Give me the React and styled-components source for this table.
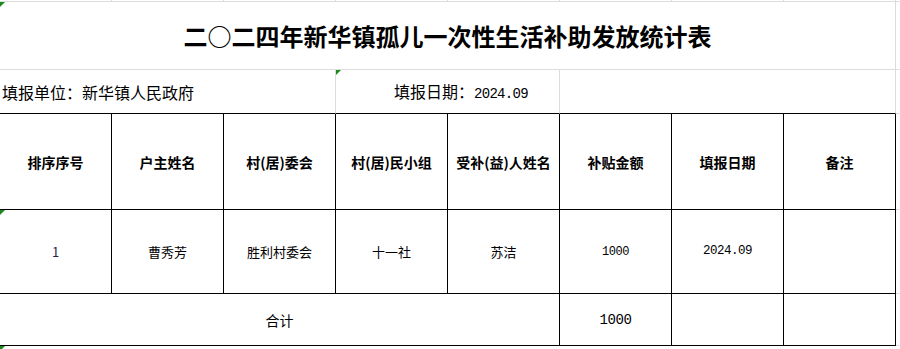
import React from "react";
import styled, { createGlobalStyle } from "styled-components";

const GlobalStyle = createGlobalStyle`
  html, body {
    margin: 0;
    padding: 0;
    background: #ffffff;
  }
  body {
    font-family: "Noto Sans CJK SC", "Liberation Sans", sans-serif;
    color: #000;
  }
`;

const GRID = "#dcdcdc";
const INK = "#000000";

const Sheet = styled.div`
  width: 900px;
  height: 349px;
  display: grid;
  grid-template-columns: repeat(8, 112px) 4px;
  grid-template-rows: 2px 68px 44px 96px 84px 52px 3px;
  overflow: hidden;
`;

const Cell = styled.div`
  position: relative;
  box-sizing: border-box;
  grid-column: ${({ span }) => (span ? `span ${span}` : "auto")};
  border-right: 1px solid ${({ right }) => right || "transparent"};
  border-bottom: 1px solid ${({ bottom }) => bottom || "transparent"};
  display: flex;
  align-items: center;
  justify-content: ${({ align }) => align || "center"};
  padding-left: ${({ indent }) => indent || 0}px;
  white-space: nowrap;
  min-width: 0;
`;

const Title = styled.span`
  font-size: 24px;
  font-weight: 700;
  line-height: 1;
`;

const Info = styled.span`
  font-size: 16px;
  line-height: 1;
`;

const Head = styled.span`
  font-size: 14px;
  font-weight: 700;
  line-height: 1;
`;

const Text = styled.span`
  font-size: ${({ size }) => size || 13}px;
  line-height: 1;
  color: ${({ tone }) => tone || INK};
`;

// SimSun-like half width digits
const Num = styled.span`
  font-family: "Liberation Mono", monospace;
  font-size: ${({ size }) => size || 12}px;
  letter-spacing: ${({ track }) => (track !== undefined ? track : -0.5)}px;
  line-height: 1;
`;

const Flag = styled.span`
  position: absolute;
  left: 0;
  top: 0;
  width: 0;
  height: 0;
  border-top: 5px solid #1a8a1a;
  border-right: 5px solid transparent;
`;

const headers = [
  "排序序号",
  "户主姓名",
  "村(居)委会",
  "村(居)民小组",
  "受补(益)人姓名",
  "补贴金额",
  "填报日期",
  "备注",
];

const rows = [
  {
    no: "1",
    owner: "曹秀芳",
    village: "胜利村委会",
    group: "十一社",
    receiver: "苏洁",
    amount: "1000",
    date: "2024.09",
    note: "",
  },
];

function App() {
  return (
    <>
      <GlobalStyle />
      <Sheet>
        {/* top strip of the sheet grid */}
        {Array.from({ length: 8 }).map((_, i) => (
          <Cell key={`s${i}`} right={GRID} bottom={GRID} />
        ))}
        <Cell bottom={GRID} />

        {/* title */}
        <Cell span={8} right={GRID} bottom={GRID}>
          <Flag />
          <Title>二○二四年新华镇孤儿一次性生活补助发放统计表</Title>
        </Cell>
        <Cell bottom={GRID} />

        {/* info row */}
        <Cell span={3} right={GRID} bottom={INK} align="flex-start" indent={2}>
          <Info>填报单位：新华镇人民政府</Info>
        </Cell>
        <Cell span={2} right={GRID} bottom={INK} align="flex-start" indent={58}>
          <Flag />
          <Info>
            填报日期：<Num size={14} track={-0.7}>2024.09</Num>
          </Info>
        </Cell>
        <Cell span={3} right={GRID} bottom={INK} />
        <Cell bottom={GRID} />

        {/* header */}
        {headers.map((h) => (
          <Cell key={h} right={INK} bottom={INK}>
            <Head>{h}</Head>
          </Cell>
        ))}
        <Cell bottom={GRID} />

        {/* data */}
        {rows.map((r) => (
          <React.Fragment key={r.no}>
            <Cell right={INK} bottom={INK}>
              <Flag />
              <Text tone="#2a1f4f">{r.no}</Text>
            </Cell>
            <Cell right={INK} bottom={INK}>
              <Text>{r.owner}</Text>
            </Cell>
            <Cell right={INK} bottom={INK}>
              <Text>{r.village}</Text>
            </Cell>
            <Cell right={INK} bottom={INK}>
              <Text>{r.group}</Text>
            </Cell>
            <Cell right={INK} bottom={INK}>
              <Text>{r.receiver}</Text>
            </Cell>
            <Cell right={INK} bottom={INK}>
              <Num>{r.amount}</Num>
            </Cell>
            <Cell right={INK} bottom={INK}>
              <Num size={12.5} track={-0.5}>{r.date}</Num>
            </Cell>
            <Cell right={INK} bottom={INK}>
              <Text>{r.note}</Text>
            </Cell>
            <Cell bottom={GRID} />
          </React.Fragment>
        ))}

        {/* total */}
        <Cell span={5} right={INK} bottom={INK}>
          <Text size={14}>合计</Text>
        </Cell>
        <Cell right={INK} bottom={INK}>
          <Num size={14} track={-0.4}>1000</Num>
        </Cell>
        <Cell right={INK} bottom={INK} />
        <Cell right={INK} bottom={INK} />
        <Cell bottom={GRID} />

        {/* bottom strip */}
        <Cell>
          <Flag />
        </Cell>
      </Sheet>
    </>
  );
}

export default App;
